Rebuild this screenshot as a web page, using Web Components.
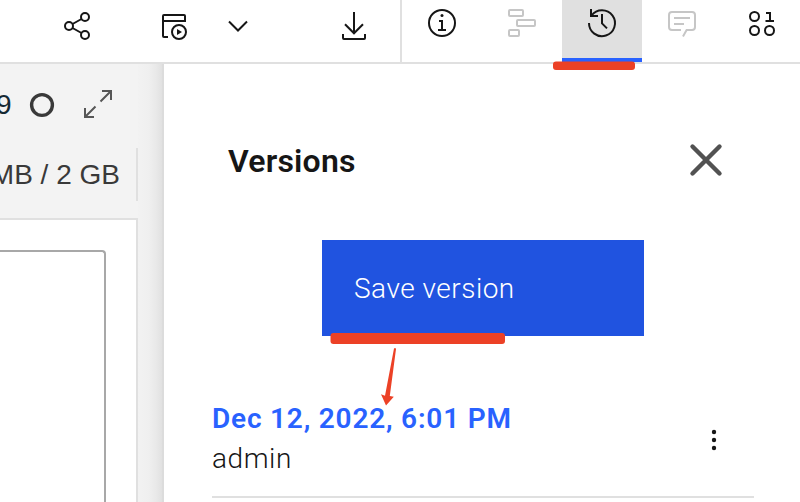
<!DOCTYPE html>
<html lang="en">
<head>
<meta charset="utf-8">
<title>Versions</title>
<style>
html,body{margin:0;height:100%;overflow:hidden;background:#fff}
body{font-family:Roboto,"Noto Sans",sans-serif;color:#161616}
</style>
</head>
<body>
<app-shell></app-shell>
<script>
const ICONS = {
  share: '<circle cx="8" cy="16" r="4"/><circle cx="24" cy="7" r="4"/><circle cx="24" cy="25" r="4"/><path d="M11.5 14 20.5 9M11.5 18l9 5"/>',
  job: '<path d="M10 27H6a1 1 0 0 1-1-1V6a1 1 0 0 1 1-1h20a1 1 0 0 1 1 1v5H5"/><circle cx="21" cy="22" r="7"/><path d="M19 19v6l5-3z" fill="currentColor" stroke="none"/>',
  chevron: '<path d="m7 11.5 9 9 9-9"/>',
  download: '<path d="M16 2v21M7 14.300l9 9 9-9M5 24v4a1 1 0 0 0 1 1h20a1 1 0 0 0 1-1v-4"/>',
  info: '<circle cx="16" cy="16" r="13"/><path d="M12 23h8M13 14h3v9"/><circle cx="16" cy="8.500" r="1.500" fill="currentColor" stroke="none"/>',
  gantt: '<rect x="3" y="3" width="14" height="6" rx="1"/><rect x="11" y="13" width="18" height="6" rx="1"/><rect x="3" y="23" width="10" height="6" rx="1"/>',
  history: '<path d="M3 16A13 13 0 1 0 5.500 8.500M5 2v7h7M16 7v9.400l5 5"/>',
  chat: '<path d="M15 23H6a3 3 0 0 1-3-3V8a3 3 0 0 1 3-3h20a3 3 0 0 1 3 3v12a3 3 0 0 1-3 3h-5.400L17 29.500M8 11h16M8 17h10"/>',
  data: '<circle cx="8.500" cy="9.500" r="4.500"/><circle cx="8.500" cy="23.500" r="4.500"/><circle cx="23.500" cy="23.500" r="4.500"/><path d="M20 6h4v8M19.500 14h8.500"/>',
  expand: '<path d="M20 3h9v9M28.500 3.500 18.500 13.500M12 29H3v-9M3.500 28.500l10-10"/>',
  ring: '<circle cx="16" cy="16" r="10.400" stroke-width="3.400"/>',
  close: '<path d="M2.500 2.500l27 27M29.500 2.500l-27 27" stroke-width="4.400" stroke-linecap="round"/>',
  dots: '<g fill="currentColor" stroke="none"><circle cx="16" cy="8" r="2.200"/><circle cx="16" cy="16" r="2.200"/><circle cx="16" cy="24" r="2.200"/></g>'
};
const define = (name, html) => customElements.define(name, class extends HTMLElement {
  connectedCallback() {
    if (!this.shadowRoot) this.attachShadow({mode: 'open'}).innerHTML = html;
  }
});

customElements.define('ui-icon', class extends HTMLElement {
  connectedCallback() {
    if (this.shadowRoot) return;
    this.attachShadow({mode: 'open'}).innerHTML = `
      <style>:host{display:block;width:32px;height:32px;flex:none}svg{display:block;overflow:visible}</style>
      <svg width="32" height="32" viewBox="0 0 32 32" fill="none" stroke="currentColor" stroke-width="2">${ICONS[this.getAttribute('name')]}</svg>`;
  }
});

define('tool-button', `
  <style>
  :host{display:flex;box-sizing:border-box;width:80px;height:62px;flex:none;justify-content:center;padding-top:7px;color:#161616}
  :host([active]){background:#e0e0e0;border-bottom:4px solid #2962ff}
  :host([disabled]){color:#c6c6c6}
  </style><slot></slot>`);

define('top-bar', `
  <style>
  :host{display:flex;height:62px;border-bottom:2px solid #e0e0e0;background:#fff}
  .actions{display:grid;grid-template-columns:97px 64px 84px 1fr;box-sizing:border-box;width:402px;flex:none;padding:10px 0 0 61px;border-right:2px solid #e0e0e0}
  .actions :last-child{justify-self:end;margin-right:30px}
  </style>
  <div class="actions"><ui-icon name="share"></ui-icon><ui-icon name="job"></ui-icon><ui-icon name="chevron"></ui-icon><ui-icon name="download"></ui-icon></div>
  <tool-button><ui-icon name="info"></ui-icon></tool-button>
  <tool-button disabled><ui-icon name="gantt"></ui-icon></tool-button>
  <tool-button active><ui-icon name="history"></ui-icon></tool-button>
  <tool-button disabled><ui-icon name="chat"></ui-icon></tool-button>
  <tool-button><ui-icon name="data"></ui-icon></tool-button>`);

define('workspace-pane', `
  <style>
  :host{display:flex;box-sizing:border-box;width:164px;flex:none;border-right:2px solid #dcdcdc;background:#f3f3f3;font-family:"Liberation Sans",Arial,sans-serif;font-size:28px;line-height:32px;color:#393939;overflow:hidden}
  .main{width:138px;flex:none;display:flex;flex-direction:column;overflow:hidden}
  .shade{flex:1;background:linear-gradient(90deg,#f2f2f2,#efefef 45%,#e9e9e9 75%,#e1e1e1)}
  .status{display:flex;align-items:center;height:32px;padding-top:25px;margin-left:-4px}
  .nine{color:#152934}
  .status ui-icon:nth-of-type(1){margin-left:14px}
  .status ui-icon:nth-of-type(2){margin:-2px 0 0 24px;color:#565656}
  .memory{display:flex;box-sizing:border-box;height:53px;margin-top:27px;border-right:2px solid #e0e0e0;justify-content:flex-end;align-items:center;padding-right:16px;white-space:nowrap}
  .canvas{flex:1;margin-top:17px;border:2px solid #e0e0e0;border-left:0;background:#fff;padding:30px 30px 0 0;border-bottom:0;display:flex}
  .cell{flex:1;border-top:2px solid #a8a8a8;border-right:2px solid #a8a8a8;border-radius:0 4px 0 0}
  </style>
  <div class="main">
    <div class="status"><span class="nine">9</span><ui-icon name="ring"></ui-icon><ui-icon name="expand"></ui-icon></div>
    <div class="memory"><span>MB / 2 GB</span></div>
    <div class="canvas"><div class="cell"></div></div>
  </div>
  <div class="shade"></div>`);

define('save-button', `
  <style>
  :host{display:flex;box-sizing:border-box;width:322px;height:96px;align-items:center;padding:0 0 0 32px;background:#2053e0;color:#fff;font-size:28px;font-weight:350;letter-spacing:.5px}
  </style><slot></slot>`);

define('version-item', `
  <style>
  :host{display:flex;justify-content:space-between;box-sizing:border-box;width:542px;height:100px;border-bottom:2px solid #e0e0e0;font-size:28px;line-height:40px}
  .date{color:#2962ff;font-weight:600;letter-spacing:.8px;padding-top:1px}
  .user{font-weight:350;letter-spacing:.55px}
  ui-icon{margin:26px 24px 0 0}
  </style>
  <div><div class="date"><slot name="date"></slot></div><div class="user"><slot name="user"></slot></div></div>
  <ui-icon name="dots"></ui-icon>`);

define('versions-panel', `
  <style>
  :host{display:block;flex:1;background:#fff}
  header{display:flex;justify-content:space-between;align-items:center;height:64px;padding:64px 78px 0 64px}
  h2{margin:2px 0 0;font-size:32px;font-weight:600;letter-spacing:.2px}
  ui-icon{color:#525252}
  save-button{margin:48px 0 0 158px}
  version-item{margin:62px 0 0 48px}
  </style>
  <header><h2>Versions</h2><ui-icon name="close"></ui-icon></header>
  <save-button>Save version</save-button>
  <version-item><span slot="date">Dec 12, 2022, 6:01 PM</span><span slot="user">admin</span></version-item>`);

define('mark-up', `
  <style>:host{position:absolute;inset:0;pointer-events:none}svg{display:block}</style>
  <svg width="800" height="502" viewBox="0 0 800 502" fill="#ec4126">
  <rect x="553" y="61.500" width="82" height="8.500" rx="3"/>
  <rect x="330.500" y="333" width="174.500" height="11" rx="3"/>
  <path d="M394 348.500q1.500-1 2 0.500L389.800 396l4 0.800L386 405.500 381 394.300l4 1.500z"/></svg>`);

define('app-shell', `
  <style>
  :host{display:flex;flex-direction:column;position:relative;width:800px;height:502px;overflow:hidden}
  .body{display:flex;flex:1;min-height:0}
  </style>
  <top-bar></top-bar>
  <div class="body"><workspace-pane></workspace-pane><versions-panel></versions-panel></div>
  <mark-up></mark-up>`);
</script>
</body>
</html>
